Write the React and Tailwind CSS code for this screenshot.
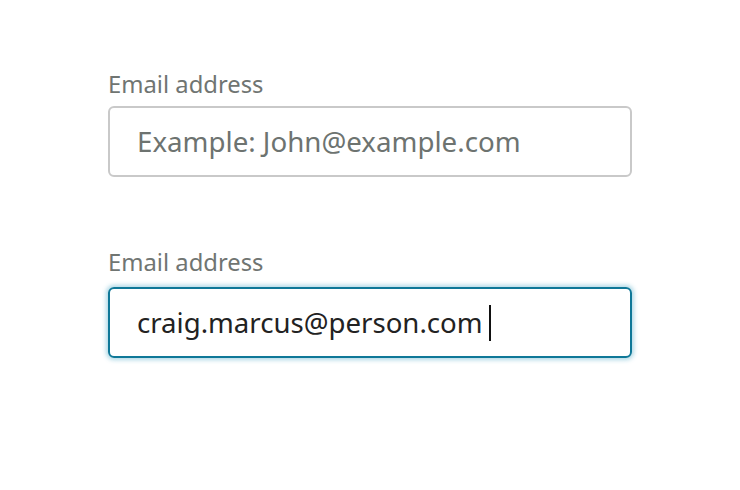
import React from 'react'

export default function App() {
  return (
    <div className="bg-white w-[740px] h-[490px] pt-[68px] pl-[108px]" style={{ fontFamily: '"Noto Sans", sans-serif' }}>
      <div className="w-[524px]">
        <label className="block text-[23.8px] leading-[32px] text-[#707572]">Email address</label>
        <div className="mt-[6px] h-[71px] border-2 border-[#c9c9c9] rounded-[6px] flex items-center pl-[27px]">
          <span className="text-[27.7px] text-[#6d7370]">Example: John@example.com</span>
        </div>

        <label className="block mt-[69px] text-[23.8px] leading-[32px] text-[#707572]">Email address</label>
        <div className="mt-[9px] h-[71px] border-2 border-[#0f7898] rounded-[6px] flex items-center pl-[27px] shadow-[0_0_4px_2px_rgba(80,170,200,0.45)]">
          <span className="text-[27.6px] text-[#222]">craig.marcus@person.com</span>
          <span className="ml-[6px] w-[2px] h-[36px] bg-[#111]" />
        </div>
      </div>
    </div>
  )
}
